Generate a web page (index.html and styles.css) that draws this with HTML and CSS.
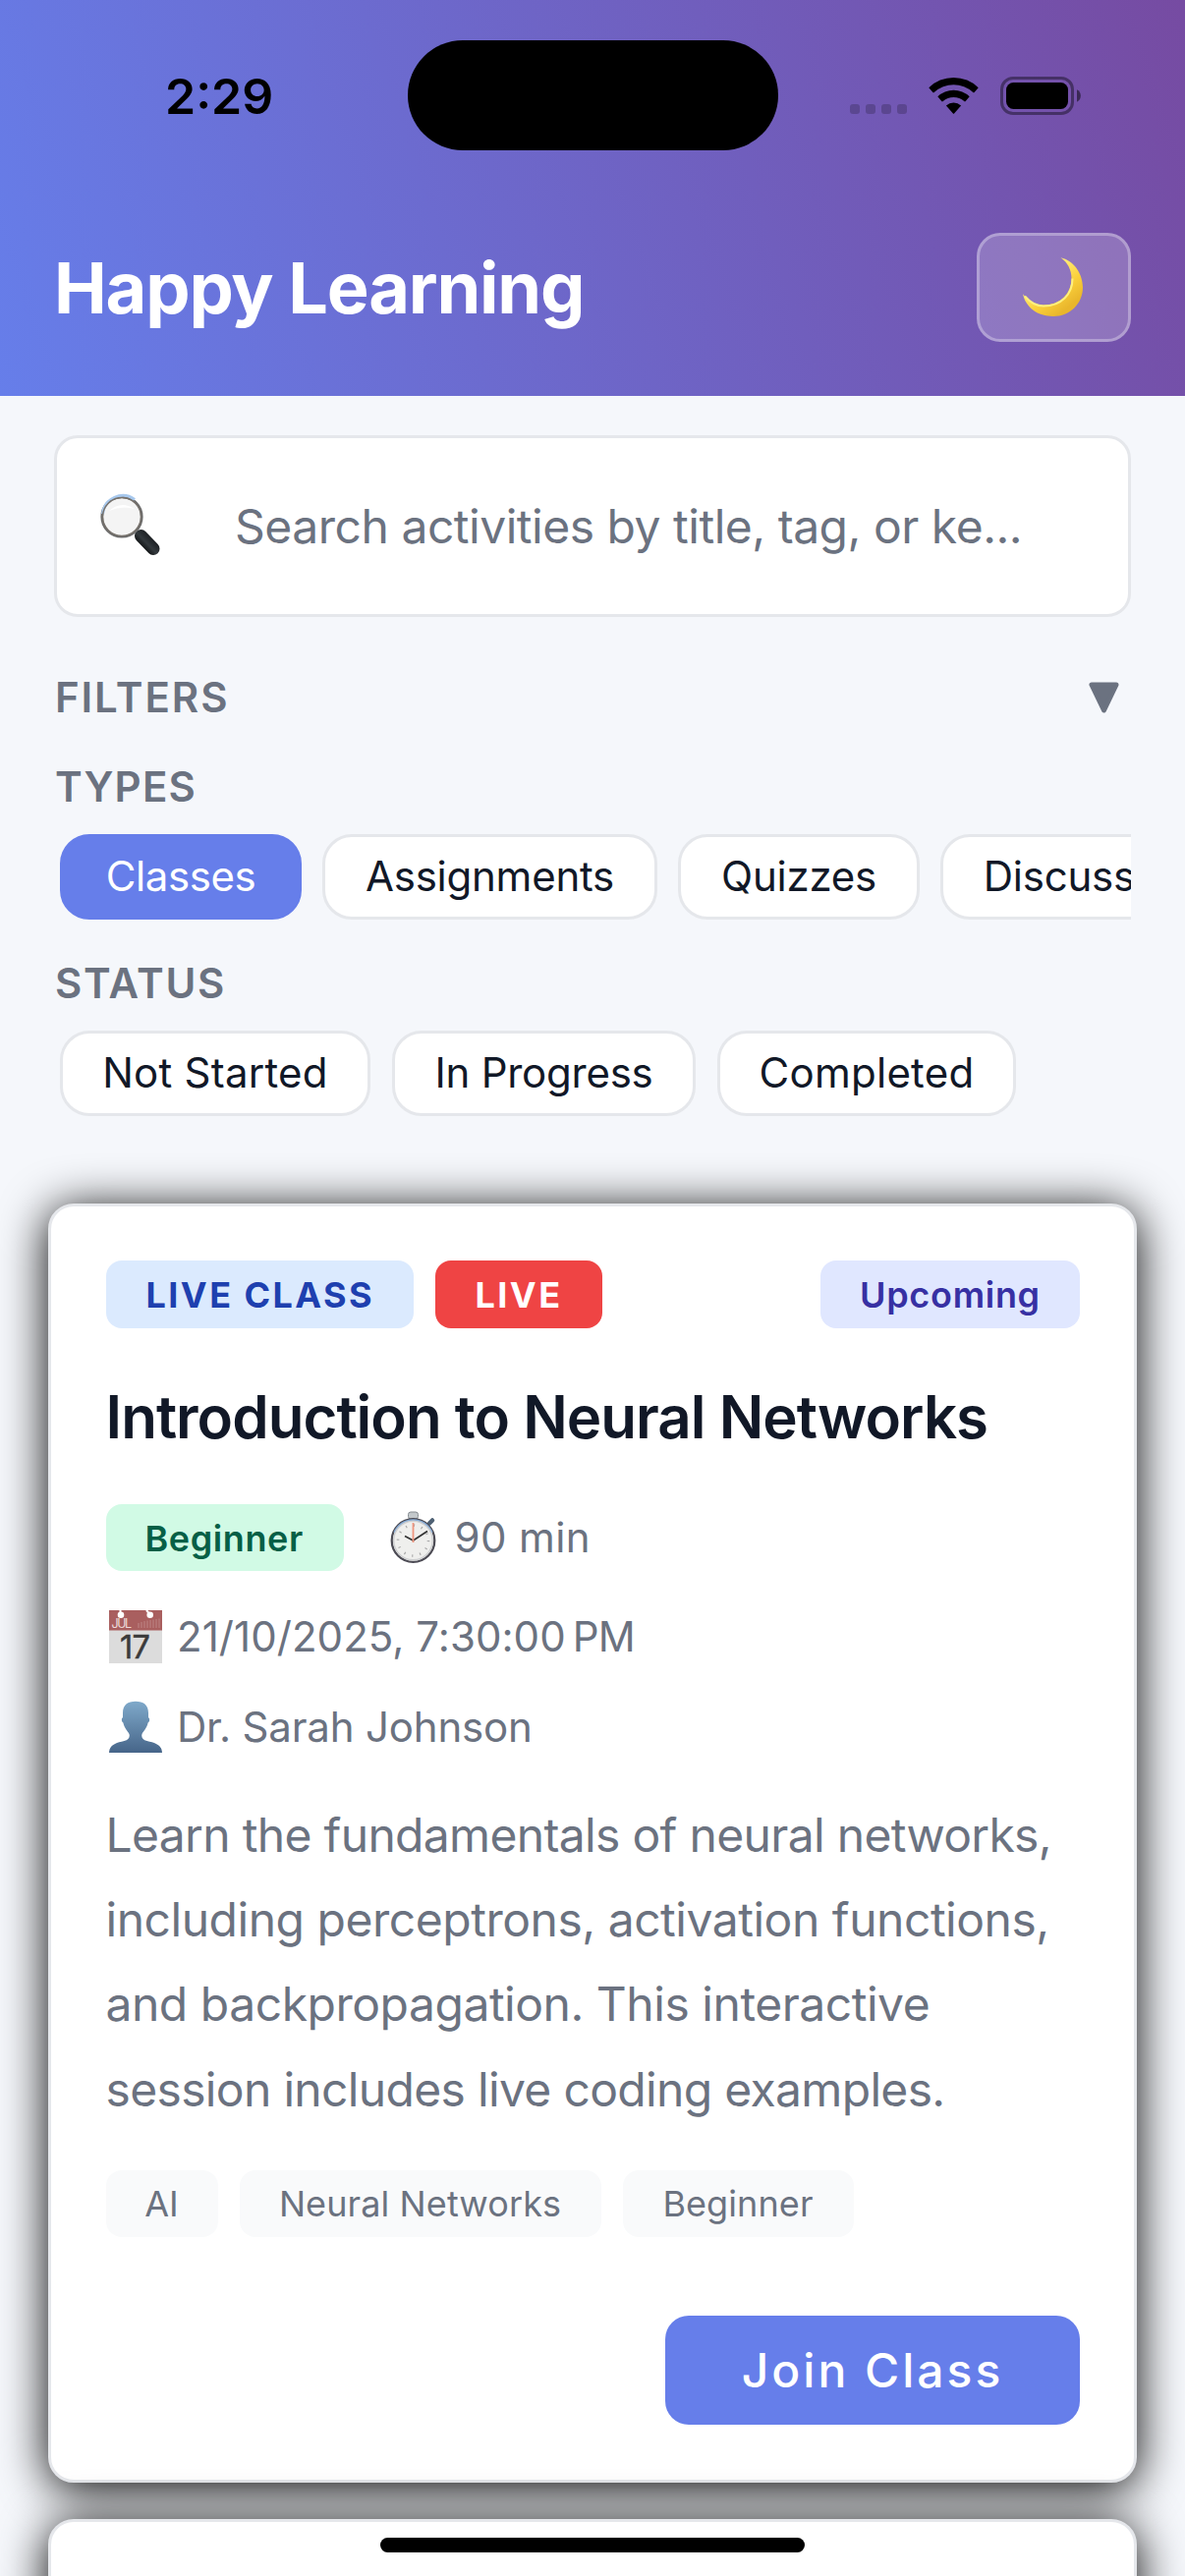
FILE: index.html
```html
<!DOCTYPE html>
<html lang="en">
<head>
<meta charset="utf-8">
<title>Happy Learning</title>
<link rel="stylesheet" href="styles.css">
</head>
<body>
<div class="app">
  <header class="header">
    <div class="status-bar">
      <span class="clock">2:29</span>
      <span class="island"></span>
      <span class="indicators">
        <span class="signal"><i></i><i></i><i></i><i></i></span>
        <svg class="wifi" viewBox="0 0 51 38" aria-hidden="true">
          <path d="M0.3 11.2A36 36 0 0 1 50.7 11.2L46.6 16A1 1 0 0 1 45.3 16A29.3 29.3 0 0 0 5.7 16A1 1 0 0 1 4.4 16Z"/>
          <path d="M9.3 20.2A23.5 23.5 0 0 1 41.7 20.2L37.7 25.1A1 1 0 0 1 36.3 25.1A16.5 16.5 0 0 0 14.7 25.1A1 1 0 0 1 13.3 25.1Z"/>
          <path d="M17.9 29.4A11.5 11.5 0 0 1 33.1 29.4L26.3 37.3A1 1 0 0 1 24.7 37.3Z"/>
        </svg>
        <svg class="battery" viewBox="0 0 83 39" aria-hidden="true">
          <rect x="1.5" y="1.5" width="72" height="36" rx="11.5" fill="none" stroke="#000" stroke-opacity=".4" stroke-width="3"/>
          <rect x="6" y="6" width="63" height="27" rx="7.5"/>
          <path d="M78 13.3C83.1 15.5 83.1 23.5 78 25.7Z" fill-opacity=".5"/>
        </svg>
      </span>
    </div>
    <div class="title-bar">
      <h1 class="app-title">Happy Learning</h1>
      <button class="theme-toggle" aria-label="Dark mode">
        <svg class="moon" viewBox="0 0 61 60" aria-hidden="true">
          <defs>
            <linearGradient id="moonFill" x1=".35" y1=".35" x2=".75" y2=".85">
              <stop offset="0" stop-color="#ffe873"/>
              <stop offset=".5" stop-color="#fbd13c"/>
              <stop offset="1" stop-color="#e9b62c"/>
            </linearGradient>
          </defs>
          <path d="M38.5 .3C52 3 61 17 61 30.5C61 47 48 60 31 60C15 60 3 51 0 37.3C5.500 44.500 13 48.500 21 48.500C38 48.500 49.500 37 49.500 21C49.500 13 45.500 5 38.500 .3Z" fill="url(#moonFill)"/>
          <path d="M2 39.500C8 46.500 14 49.500 21 49.500C39 49.500 50.500 37.500 50.500 21.500" fill="none" stroke="#fff07f" stroke-width="2"/>
        </svg>
      </button>
    </div>
  </header>

  <main class="content">
    <div class="search">
      <svg class="search-icon" viewBox="0 0 61 69" aria-hidden="true">
        <defs>
          <linearGradient id="handle" x1="1" y1="0" x2="0" y2="1">
            <stop offset="0" stop-color="#15181b"/>
            <stop offset=".55" stop-color="#33393d"/>
            <stop offset="1" stop-color="#050607"/>
          </linearGradient>
        </defs>
        <path d="M39 43L58 61" stroke="#111416" stroke-width="4"/>
        <path d="M41.500 44.500L54 57.500" stroke="url(#handle)" stroke-width="13" stroke-linecap="round"/>
        <circle cx="22" cy="25" r="20.300" fill="#f4f4f4" stroke="#6b6b6b" stroke-width="2.600"/>
        <path d="M2.500 22A20.500 20.500 0 0 1 35 7.500" fill="none" stroke="#a8c9ee" stroke-width="3"/>
        <circle cx="22" cy="25" r="19.500" fill="none" stroke="#77726c" stroke-width="1.500"/>
        <path d="M9 19Q21 8 35 17Q22 13 9 19Z" fill="#fff"/>
      </svg>
      <span class="placeholder">Search activities by title, tag, or ke...</span>
    </div>

    <div class="filters-head">
      <h2 class="label label-filters">FILTERS</h2>
      <svg class="caret" viewBox="0 0 31 32" aria-hidden="true"><path d="M3 3H28L15.500 29Z"/></svg>
    </div>

    <h3 class="label label-types">TYPES</h3>
    <div class="chips">
      <span class="chip chip-active w-classes">Classes</span>
      <span class="chip w-assignments">Assignments</span>
      <span class="chip w-quizzes">Quizzes</span>
      <span class="chip w-discussions">Discussions</span>
    </div>

    <h3 class="label label-status">STATUS</h3>
    <div class="chips chips-status">
      <span class="chip chip-wide w-not-started">Not Started</span>
      <span class="chip w-in-progress">In Progress</span>
      <span class="chip chip-wide w-completed">Completed</span>
    </div>
  </main>

  <section class="cards">
    <article class="card">
      <div class="badges">
        <span class="badge badge-type">LIVE CLASS</span>
        <span class="badge badge-live">LIVE</span>
        <span class="badge badge-upcoming">Upcoming</span>
      </div>
      <h2 class="card-title">Introduction to Neural Networks</h2>
      <div class="level-row">
        <span class="badge badge-level">Beginner</span>
        <svg class="stopwatch" viewBox="0 0 47 54" aria-hidden="true">
          <rect x="18.500" y="1" width="10" height="7" rx="2.500" fill="#c3c8cb" stroke="#858b90"/>
          <path d="M40 12.500L43 9.500" stroke="#4e6073" stroke-width="4.500" stroke-linecap="round"/>
          <circle cx="23.500" cy="30" r="21.800" fill="#efefed" stroke="#4d4c55" stroke-width="2.200"/>
          <path d="M4.500 22A20.500 20.500 0 0 1 42.500 22" fill="none" stroke="#86abd5" stroke-width="2"/>
          <circle cx="23.500" cy="30" r="19.800" fill="none" stroke="#d0d1d2" stroke-width="1.500"/>
          <circle cx="23.500" cy="30" r="15.500" fill="none" stroke="#aaa" stroke-width="2.600" stroke-dasharray="1.200 6.915"/>
          <path d="M15 25.500L23.500 30L38 20.500" fill="none" stroke="#333" stroke-width="1.700"/>
          <path d="M23.500 32V12" stroke="#ef967f" stroke-width="1.800"/>
        </svg>
        <span class="meta-text duration">90 min</span>
      </div>
      <div class="meta-row">
        <svg class="meta-icon" viewBox="0 0 54 54" aria-hidden="true">
          <rect width="54" height="54" fill="#dcdcdc"/>
          <rect width="54" height="20.500" fill="#a95f5f"/>
          <path d="M11.500 0V4M38 0L41.500 4" stroke="#fff" stroke-width="2"/>
          <circle cx="12" cy="4.800" r="3.300" fill="#fff"/>
          <circle cx="41.700" cy="4.800" r="3.300" fill="#fff"/>
          <path d="M30 18V13M33 18V12M36 18V11M39 18V10.500M42 18V10M45 18V9.500M48 18V9M51 18V8.500" stroke="#c08b8b" stroke-width=".9"/>
          <text x="2.500" y="18.300" font-family="Inter, sans-serif" font-size="12.500" textLength="20.500" fill="#ecd9d9">JUL</text>
          <text x="11" y="48.500" font-family="Inter, sans-serif" font-size="32.500" font-weight="400" textLength="31" fill="#3b3b3b" stroke="#3b3b3b" stroke-width=".5">17</text>
        </svg>
        <span class="meta-text date">21/10/2025, 7:30:00<span class="meridiem">PM</span></span>
      </div>
      <div class="meta-row">
        <svg class="meta-icon" viewBox="0 0 54 54" aria-hidden="true">
          <defs>
            <linearGradient id="bust" x1="0" y1="0" x2="0" y2="1">
              <stop offset="0" stop-color="#7fa9ca"/>
              <stop offset="1" stop-color="#466589"/>
            </linearGradient>
          </defs>
          <path d="M27 .8C35 .8 40 4.500 40 12.500V17.300C41.800 18 41.300 21.500 39.600 22.500C38.500 28 35 31 33.500 34C32.500 37.500 34.500 40 38.500 41C48 43.300 53.500 45 54 53H0C.5 45 6 43.300 15.500 41C19.500 40 21.500 37.500 20.500 34C19 31 15.500 28 14.400 22.500C12.700 21.500 12.200 18 14 17.300V12.500C14 4.500 19 .8 27 .8Z" fill="url(#bust)"/>
        </svg>
        <span class="meta-text instructor">Dr. Sarah Johnson</span>
      </div>
      <p class="description"><span class="tight">Learn the fundamentals of neural networks,</span><br>including perceptrons, activation functions,<br>and backpropagation. This interactive<br><span class="tight">session includes live coding examples.</span></p>
      <div class="tags">
        <span class="tag w-ai">AI</span>
        <span class="tag w-neural">Neural Networks</span>
        <span class="tag w-beginner">Beginner</span>
      </div>
      <button class="join">Join Class</button>
    </article>
    <article class="card card-next"></article>
  </section>

  <div class="home-indicator"></div>
</div>
</body>
</html>
```
FILE: styles.css
```css
* {
  box-sizing: border-box;
}

body {
  margin: 0;
  background: #f5f7fb;
  font-family: Inter, "Liberation Sans", sans-serif;
}

h1, h2, h3, p {
  margin: 0;
}

button {
  padding: 0;
  border: 0;
  font-family: inherit;
}

svg {
  display: block;
  flex: none;
}

.app {
  position: relative;
  width: 1206px;
  height: 2622px;
  overflow: hidden;
  background: #f5f7fb;
}

/* Header */

.header {
  height: 403px;
  background: linear-gradient(71.5deg, #667eea, #764ba2);
}

.status-bar {
  display: flex;
  align-items: flex-start;
  justify-content: space-between;
  height: 237px;
  padding: 41px 105px 0 168px;
}

.clock {
  width: 247px;
  font-size: 50px;
  font-weight: 600;
  line-height: 114px;
}

.island {
  width: 377px;
  height: 112px;
  border-radius: 56px;
  background: #000;
}

.indicators {
  display: flex;
  align-items: flex-start;
  justify-content: flex-end;
  width: 309px;
  padding-top: 37px;
}

.signal {
  display: flex;
  gap: 6px;
  margin: 28px 22px 0 0;
}

.signal i {
  width: 10px;
  height: 10px;
  border-radius: 3px;
  background: rgba(0, 0, 0, .2);
}

.wifi {
  width: 51px;
  height: 38px;
  margin-right: 22px;
}

.battery {
  width: 83px;
  height: 39px;
}

.title-bar {
  display: flex;
  align-items: center;
  justify-content: space-between;
  height: 111px;
  padding: 0 55px;
}

.app-title {
  color: #fff;
  font-size: 72px;
  font-weight: 700;
  letter-spacing: -1.2px;
  line-height: 90px;
}

.theme-toggle {
  display: flex;
  align-items: center;
  justify-content: center;
  width: 157px;
  height: 111px;
  padding: 0 3px 2px 0;
  border: 3px solid rgba(255, 255, 255, .3);
  border-radius: 24px;
  background: rgba(255, 255, 255, .2);
}

.moon {
  width: 61px;
  height: 60px;
}

/* Search and filters */

.content {
  padding: 40px 55px 0;
}

.search {
  display: flex;
  align-items: center;
  height: 185px;
  padding-left: 44px;
  border: 3px solid #e5e7eb;
  border-radius: 24px;
  background: #fff;
}

.search-icon {
  width: 61px;
  height: 69px;
  margin-right: 76px;
}

.placeholder {
  color: #6b7280;
  font-size: 48px;
  letter-spacing: -.48px;
  white-space: nowrap;
}

.filters-head {
  display: flex;
  align-items: center;
  justify-content: space-between;
  height: 60px;
  margin-top: 52px;
  padding-right: 12px;
}

.caret {
  width: 31px;
  height: 32px;
  fill: #6b7280;
  stroke: #6b7280;
  stroke-width: 5;
  stroke-linejoin: round;
}

.label {
  padding-left: 1px;
  color: #6b7280;
  font-size: 42px;
  font-weight: 600;
  line-height: 50px;
}

.label-filters {
  letter-spacing: 1.9px;
}

.label-types {
  margin-top: 36px;
  letter-spacing: 1.2px;
}

.label-status {
  margin-top: 40px;
  letter-spacing: 1.62px;
}

.chips {
  display: flex;
  gap: 21px;
  height: 87px;
  margin-top: 23px;
  padding-left: 6px;
  overflow: hidden;
}

.chips-status {
  gap: 22px;
}

.chip {
  flex: none;
  border: 3px solid #e5e7eb;
  border-radius: 30px;
  background: #fff;
  color: #111827;
  font-size: 42px;
  letter-spacing: -.25px;
  line-height: 80px;
  text-align: center;
}

.chip-active {
  border-color: #667eea;
  background: #667eea;
  color: #fff;
  letter-spacing: -.4px;
}

.chip-wide {
  letter-spacing: .25px;
}

.w-classes { width: 246px; }
.w-assignments { width: 341px; }
.w-quizzes { width: 246px; }
.w-discussions { width: 323px; }
.w-not-started { width: 316px; }
.w-in-progress { width: 309px; }
.w-completed { width: 304px; }

/* Cards */

.cards {
  display: flex;
  flex-direction: column;
  gap: 37px;
  padding: 89px 49px 0;
}

.card {
  height: 1302px;
  padding: 55px 55px 0 55.5px;
  border: 3px solid #e5e7eb;
  border-radius: 26px;
  background: #fff;
  box-shadow: 0 6px 48px #000;
}

.badges {
  display: flex;
  gap: 22px;
}

.badge {
  flex: none;
  height: 69px;
  border-radius: 16px;
  padding-left: 40px;
  font-size: 36px;
  font-weight: 600;
  line-height: 71px;
}

.badge-type {
  width: 313px;
  padding-left: 41px;
  background: #dbeafe;
  color: #1e40af;
  font-weight: 700;
  letter-spacing: 2.43px;
}

.badge-live {
  width: 170px;
  padding-left: 41px;
  background: #ef4444;
  color: #fff;
  font-weight: 700;
  letter-spacing: 2.43px;
}

.badge-upcoming {
  width: 264px;
  margin-left: auto;
  background: #e0e7ff;
  color: #3730a3;
  letter-spacing: .7px;
}

.card-title {
  margin-top: 50px;
  color: #111827;
  font-size: 60px;
  font-weight: 600;
  letter-spacing: -.97px;
  line-height: 80px;
  white-space: nowrap;
}

.level-row {
  display: flex;
  align-items: center;
  height: 68px;
  margin-top: 49px;
}

.badge-level {
  width: 242px;
  height: 68px;
  background: #d1fae5;
  color: #065f46;
  letter-spacing: .6px;
}

.stopwatch {
  width: 47px;
  height: 54px;
  margin: 0 19px 0 47px;
}

.meta-row {
  display: flex;
  align-items: center;
  gap: 15px;
  height: 54px;
  margin: 40px 0 38px 3.5px;
}

.meta-row + .meta-row {
  margin: 0 0 0 3.5px;
}

.meta-icon {
  width: 54px;
  height: 54px;
}

.meta-text {
  color: #6b7280;
  font-size: 42px;
  line-height: 54px;
  white-space: nowrap;
}

.duration {
  letter-spacing: .4px;
}

.date {
  letter-spacing: .06px;
}

.meridiem {
  margin-left: 7px;
  letter-spacing: -.8px;
}

.instructor {
  letter-spacing: -.2px;
}

.description {
  margin-top: 40px;
  color: #6b7280;
  font-size: 48px;
  letter-spacing: -.47px;
  line-height: 86.2px;
  white-space: nowrap;
}

.tight {
  letter-spacing: -.67px;
}

.tags {
  display: flex;
  gap: 22px;
  margin-top: 39px;
}

.tag {
  height: 68px;
  border-radius: 16px;
  background: #f9fafb;
  color: #6b7280;
  font-size: 36px;
  letter-spacing: .1px;
  line-height: 68px;
  text-align: center;
}

.w-ai { width: 114px; }
.w-neural { width: 368px; }
.w-beginner { width: 235px; }

.join {
  display: block;
  width: 422px;
  height: 111px;
  margin: 80px 0 0 auto;
  border-radius: 24px;
  background: #667eea;
  color: #fff;
  font-size: 48px;
  font-weight: 500;
  letter-spacing: 3px;
  line-height: 111px;
}

/* Home indicator floats above the scrolling list */

.home-indicator {
  position: absolute;
  top: 2583px;
  left: 387px;
  width: 432px;
  height: 15px;
  border-radius: 8px;
  background: #000;
}
```
